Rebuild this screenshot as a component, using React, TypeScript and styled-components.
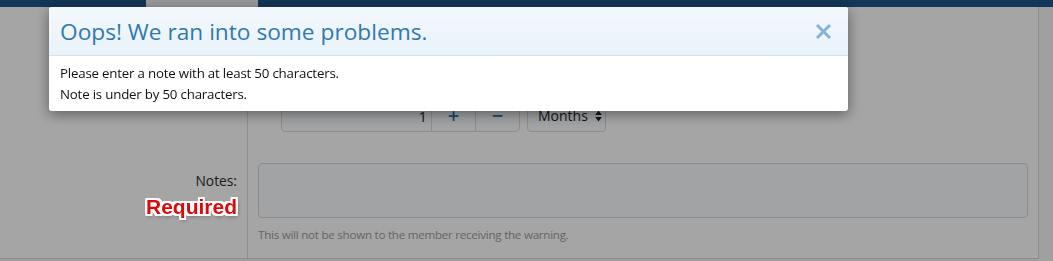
import React from "react";
import styled, { createGlobalStyle } from "styled-components";

const GlobalStyle = createGlobalStyle`
  html, body { margin: 0; padding: 0; }
  body {
    font-family: "Open Sans", "Noto Sans", sans-serif;
    width: 1053px;
    height: 261px;
    overflow: hidden;
  }
  * { box-sizing: border-box; }
`;

const Page = styled.div`
  position: relative;
  width: 1053px;
  height: 261px;
  background: #f5f5f5;
  display: flex;
  flex-direction: column;
  overflow: hidden;
`;

const TopBar = styled.div`
  height: 7px;
  background: #1f538a;
  display: flex;
  flex-shrink: 0;
`;

const TopTab = styled.div`
  margin-left: 146px;
  width: 112px;
  background: #eeeeee;
`;

const Content = styled.div`
  display: flex;
  align-items: flex-start;
  flex: 1;
`;

const Block = styled.div`
  width: 1039px;
  background: #fefefe;
  border-right: 1px solid #d8d8d8;
  border-bottom: 1px solid #d8d8d8;
  display: flex;
  flex-direction: column;
`;

const FormRow = styled.div`
  display: grid;
  grid-template-columns: 248px 1fr;
`;

const RowLabel = styled.div<{ $padTop: number }>`
  border-right: 1px solid #dcdcdc;
  padding: ${(p) => p.$padTop}px 10px 0 10px;
  display: flex;
  flex-direction: column;
  align-items: flex-end;
  font-size: 13.8px;
  line-height: 20px;
  color: #2c2c2c;
`;

const RowValue = styled.div<{ $pad: string }>`
  padding: ${(p) => p.$pad};
  display: flex;
  flex-direction: column;
`;

const OptionSpacer = styled.div`
  height: 80px;
`;

const InputLine = styled.div`
  display: flex;
  gap: 7px;
  margin-left: 23px;
`;

const InputGroup = styled.div`
  width: 239px;
  height: 33px;
  display: flex;
  border: 1px solid #d8d8d8;
  border-radius: 4px;
  background: #f8fbfe;
`;

const NumberField = styled.div`
  flex: 1;
  display: flex;
  align-items: center;
  justify-content: flex-end;
  padding-right: 4px;
  font-size: 15px;
  color: #1e1e1e;
`;

const StepButton = styled.div`
  width: 44px;
  display: flex;
  align-items: center;
  justify-content: center;
  border-left: 1px solid #d8d8d8;
  color: #2577b1;
  font-size: 20px;
  font-weight: 600;
`;

const SelectBox = styled.div`
  width: 79px;
  height: 33px;
  display: flex;
  align-items: center;
  gap: 7px;
  padding-left: 10px;
  border: 1px solid #d8d8d8;
  border-radius: 4px;
  background: #f8fbfe;
  font-size: 14px;
  color: #1e1e1e;
`;

const NotesArea = styled.textarea`
  width: 770px;
  height: 55px;
  border: 1px solid #d6d6d6;
  border-radius: 4px;
  background: #f9fbfd;
  resize: none;
  margin: 0;
  padding: 6px 8px;
  font-family: inherit;
`;

const Hint = styled.div`
  margin-top: 8px;
  line-height: 18px;
  font-size: 11.6px;
  letter-spacing: -0.25px;
  color: #9a9a9a;
`;

const RequiredTag = styled.div`
  position: relative;
  z-index: 20;
  margin-top: 4px;
  margin-right: 0;
  line-height: 24px;
  font-family: "Liberation Sans", Arial, sans-serif;
  font-weight: 700;
  font-size: 21px;
  color: #dc0a0a;
  text-shadow:
    -2px 0 0 #fff, 2px 0 0 #fff, 0 -2px 0 #fff, 0 2px 0 #fff,
    -2px -2px 0 #fff, 2px -2px 0 #fff, -2px 2px 0 #fff, 2px 2px 0 #fff,
    1px 2px 4px rgba(0, 0, 0, 0.6);
`;

const Overlay = styled.div`
  position: fixed;
  inset: 0;
  background: rgba(0, 0, 0, 0.35);
  z-index: 10;
`;

const Modal = styled.div`
  position: fixed;
  left: 49px;
  top: 7px;
  width: 799px;
  z-index: 11;
  background: #ffffff;
  border-radius: 3px;
  overflow: hidden;
  box-shadow: 0 3px 14px rgba(0, 0, 0, 0.45);
`;

const ModalHeader = styled.div`
  height: 49px;
  display: flex;
  align-items: center;
  justify-content: space-between;
  padding: 1px 16px 0 11px;
  background: linear-gradient(#f3f8fd, #e9f3fa);
  border-bottom: 1px solid #d5e1ea;
`;

const ModalTitle = styled.h2`
  margin: 0;
  font-size: 22.7px;
  font-weight: 400;
  color: #3079b0;
`;

const CloseButton = styled.button`
  width: 18px;
  height: 18px;
  padding: 0;
  border: 0;
  background: none;
  display: flex;
  align-items: center;
  justify-content: center;
  cursor: pointer;
`;

const ModalBody = styled.div`
  padding: 7px 11px 6px;
  font-size: 13.3px;
  letter-spacing: -0.2px;
  line-height: 21px;
  color: #111111;
`;

export default function App() {
  return (
    <>
      <GlobalStyle />
      <Page>
        <TopBar>
          <TopTab />
        </TopBar>
        <Content>
          <Block>
            <FormRow>
              <RowLabel $padTop={20} />
              <RowValue $pad="12px 10px 15px 10px">
                <OptionSpacer />
                <InputLine>
                  <InputGroup>
                    <NumberField>1</NumberField>
                    <StepButton>+</StepButton>
                    <StepButton>−</StepButton>
                  </InputGroup>
                  <SelectBox>
                    Months
                    <svg width="7" height="12" viewBox="0 0 7 12">
                      <path d="M3.5 0.5 L6.8 5 L0.2 5 Z M3.5 11.5 L6.8 7 L0.2 7 Z" fill="#222" />
                    </svg>
                  </SelectBox>
                </InputLine>
              </RowValue>
            </FormRow>
            <FormRow>
              <RowLabel $padTop={24}>
                Notes:
                <RequiredTag>Required</RequiredTag>
              </RowLabel>
              <RowValue $pad="16px 10px 14px 10px">
                <NotesArea />
                <Hint>This will not be shown to the member receiving the warning.</Hint>
              </RowValue>
            </FormRow>
          </Block>
        </Content>
        <Overlay />
        <Modal>
          <ModalHeader>
            <ModalTitle>Oops! We ran into some problems.</ModalTitle>
            <CloseButton aria-label="Close">
              <svg width="17" height="17" viewBox="0 0 17 17">
                <path d="M2 2 L15 15 M15 2 L2 15" stroke="#86b4d8" strokeWidth="3" strokeLinecap="butt" />
              </svg>
            </CloseButton>
          </ModalHeader>
          <ModalBody>
            <div>Please enter a note with at least 50 characters.</div>
            <div>Note is under by 50 characters.</div>
          </ModalBody>
        </Modal>
      </Page>
    </>
  );
}
